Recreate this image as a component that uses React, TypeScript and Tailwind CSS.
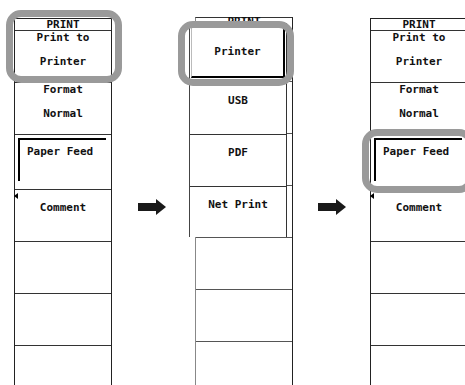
type Row = { lines?: string[]; pressed?: string; marker?: boolean };

const mainRows: Row[] = [
  { lines: ['Print to', 'Printer'] },
  { lines: ['Format', 'Normal'] },
  { pressed: 'Paper Feed' },
  { lines: ['Comment'], marker: true },
  {},
  {},
  {},
];

function MenuRow({ row }: { row: Row }) {
  return (
    <div className="relative h-[52px] border-b border-[#333]">
      {row.marker && (
        <div className="absolute left-[-1px] top-[3px] h-0 w-0 border-y-[3px] border-r-[4px] border-y-transparent border-r-black" />
      )}
      {row.pressed && (
        <div className="ml-[3px] mt-[3px] h-[43px] w-[88px] border-l-2 border-t-2 border-black pl-[7px] pt-[5px]">
          {row.pressed}
        </div>
      )}
      {row.lines && row.lines.length === 2 && (
        <div className="flex flex-col items-center">
          <span>{row.lines[0]}</span>
          <span className="mt-[11px]">{row.lines[1]}</span>
        </div>
      )}
      {row.lines && row.lines.length === 1 && (
        <div className="flex justify-center pt-[11px]">{row.lines[0]}</div>
      )}
    </div>
  );
}

function PrintMenu() {
  return (
    <div className="mt-[18px] w-[98px] shrink-0 border-x border-t border-[#222] bg-white">
      <div className="flex h-[12px] justify-center border-b border-[#333] leading-[11px]">PRINT</div>
      {mainRows.map((r, i) => (
        <MenuRow key={i} row={r} />
      ))}
    </div>
  );
}

function Arrow() {
  return (
    <svg width="28" height="16" viewBox="0 0 28 16" className="mt-[199px] shrink-0">
      <rect x="0" y="4" width="19" height="8" fill="#1a1a1a" />
      <polygon points="18,0 28,8 18,16" fill="#1a1a1a" />
    </svg>
  );
}

function Highlight({ className }: { className: string }) {
  return <div className={`absolute rounded-[15px] border-[7px] border-[#9a9a9a] ${className}`} />;
}

export default function App() {
  const submenu = ['USB', 'PDF'];
  return (
    <div className="relative h-[385px] w-[465px] overflow-hidden bg-white font-['DejaVu_Sans_Mono',monospace] text-[11px] font-bold leading-[13px] text-[#111]">
      <div className="flex items-start">
        <div className="ml-[14px]">
          <PrintMenu />
        </div>

        <div className="ml-[26px]">
          <Arrow />
        </div>

        {/* PRINT menu with the Print to submenu open over it */}
        <div className="relative ml-[23px] w-[104px] shrink-0">
          <div className="ml-[6px] mt-[17px] w-[98px] border-l border-r border-t border-l-[#888] border-r-[#222] border-t-[#333] bg-white">
            <div className="flex h-[12px] justify-center border-b border-[#333] leading-[11px]">
              <span className="-mt-[2px]">PRINT</span>
            </div>
            {[0, 1, 2, 3, 4, 5, 6].map((i) => (
              <div key={i} className="h-[52px] border-b border-[#555]" />
            ))}
          </div>
          <div className="absolute left-0 top-[23px] w-[98px] border-x border-l-[#444] border-r-[#333] bg-white">
            <div className="h-[60px] border-b border-[#333] px-[1px] pt-[3px]">
              <div className="flex h-[52px] justify-center border-b-2 border-l border-r-2 border-t border-b-black border-l-[#bbb] border-r-black border-t-[#ccc] pt-[18px]">
                Printer
              </div>
            </div>
            {submenu.map((s) => (
              <div key={s} className="flex h-[52px] justify-center border-b border-[#333] pt-[11px]">
                {s}
              </div>
            ))}
            <div className="flex h-[50px] justify-center pt-[11px]">Net Print</div>
          </div>
        </div>

        <div className="ml-[25px]">
          <Arrow />
        </div>

        <div className="ml-[24px]">
          <PrintMenu />
        </div>
      </div>

      <Highlight className="left-[6px] top-[10px] h-[73px] w-[116px]" />
      <Highlight className="left-[178px] top-[21px] h-[65px] w-[116px]" />
      <Highlight className="left-[362px] top-[129px] h-[64px] w-[112px]" />
    </div>
  );
}
